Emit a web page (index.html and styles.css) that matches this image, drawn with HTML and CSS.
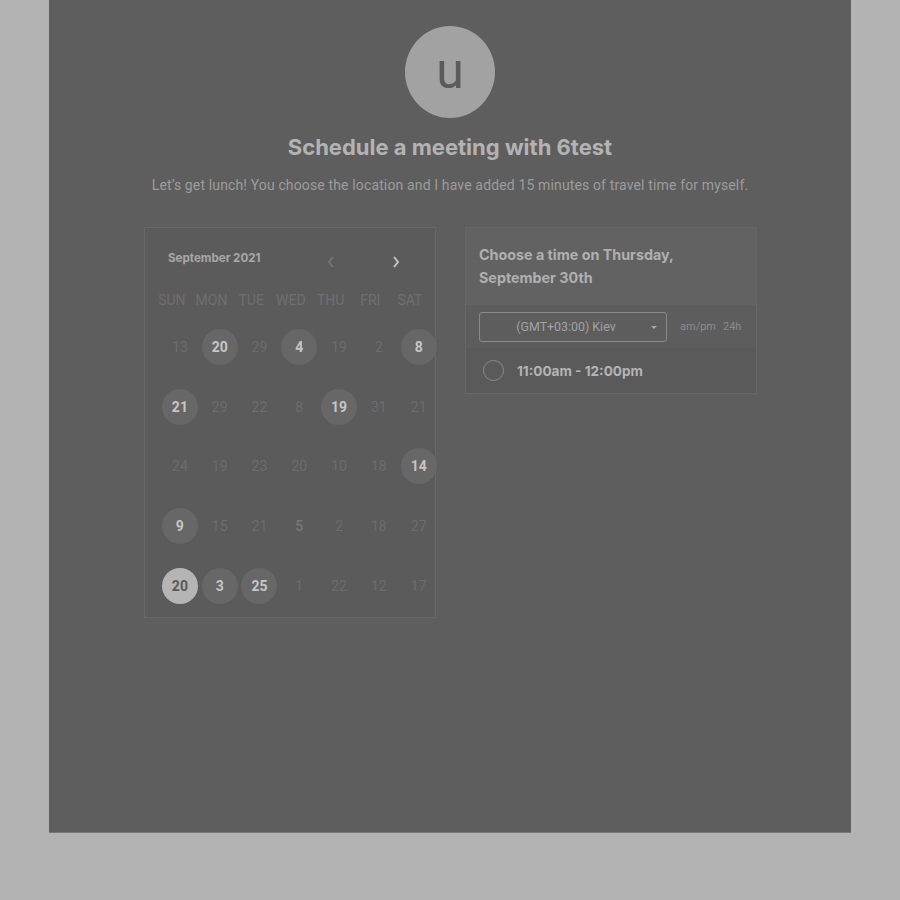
FILE: index.html
```html
<!DOCTYPE html>
<html>
<head>
<meta charset="utf-8">
<link rel="stylesheet" href="styles.css">
</head>
<body>
<div class="panel">
  <div class="avatar"><span>u</span></div>
  <h1 class="title">Schedule a meeting with 6test</h1>
  <p class="subtitle">Let’s get lunch! You choose the location and I have added 15 minutes of travel time for myself.</p>
  <div class="cards">
    <div class="calendar">
      <div class="cal-head">
        <span class="month">September 2021</span>
        <span class="arrow prev"><svg width="10" height="14" viewBox="0 0 10 14"><path d="M7 2 L3 7 L7 12" fill="none" stroke="currentColor" stroke-width="2"/></svg></span>
        <span class="arrow next"><svg width="10" height="14" viewBox="0 0 10 14"><path d="M3 2 L7 7 L3 12" fill="none" stroke="currentColor" stroke-width="2"/></svg></span>
      </div>
      <div class="dow">
        <span>SUN</span><span>MON</span><span>TUE</span><span>WED</span><span>THU</span><span>FRI</span><span>SAT</span>
      </div>
      <div class="days">
        <span>13</span><span class="av">20</span><span>29</span><span class="av">4</span><span>19</span><span>2</span><span class="av">8</span>
        <span class="av">21</span><span>29</span><span>22</span><span>8</span><span class="av">19</span><span>31</span><span>21</span>
        <span>24</span><span>19</span><span>23</span><span>20</span><span>10</span><span>18</span><span class="av">14</span>
        <span class="av">9</span><span>15</span><span>21</span><span class="semi">5</span><span>2</span><span>18</span><span>27</span>
        <span class="sel">20</span><span class="av">3</span><span class="av">25</span><span>1</span><span>22</span><span>12</span><span>17</span>
      </div>
    </div>
    <div class="times">
      <div class="times-head">Choose a time on Thursday, September 30th</div>
      <div class="tz-bar">
        <div class="tz-select"><span>(GMT+03:00) Kiev</span><span class="caret"></span></div>
        <div class="fmt"><span>am/pm</span><span>24h</span></div>
      </div>
      <div class="slot"><span class="radio"></span><span class="slot-text">11:00am - 12:00pm</span></div>
    </div>
  </div>
</div>
</body>
</html>
```
FILE: styles.css
```css
* { box-sizing: border-box; }
html, body { margin: 0; padding: 0; }
body {
  background: #b3b3b3;
  width: 900px;
  height: 900px;
  font-family: Roboto, "Liberation Sans", sans-serif;
}
.panel {
  margin-left: 49px;
  width: 802px;
  height: 833px;
  background: #5e5e5e;
  border-bottom: 1px solid #787878;
  display: flex;
  flex-direction: column;
  align-items: center;
  padding-top: 26px;
}
.avatar {
  width: 90px;
  height: 92px;
  border-radius: 50%;
  background: #a2a2a2;
  display: flex;
  align-items: center;
  justify-content: center;
}
.avatar span {
  font-family: Roboto, sans-serif;
  font-size: 50px;
  color: #5b5b5b;
  line-height: 1;
  margin-top: -3px;
}
.title {
  margin: 15px 0 0;
  font-family: Inter, sans-serif;
  font-weight: 700;
  font-size: 22px;
  letter-spacing: 0;
  line-height: 28px;
  color: #b3b3b3;
}
.subtitle {
  margin: 14px 0 0;
  font-size: 14px;
  letter-spacing: 0.14px;
  line-height: 20px;
  color: #9c9c9c;
}
.cards {
  margin-top: 32px;
  display: flex;
  gap: 29px;
  align-items: flex-start;
  align-self: flex-start;
  margin-left: 95px;
}
.calendar {
  width: 292px;
  height: 391px;
  background: #5b5b5b;
  border: 1px solid #676767;
  padding-top: 20px;
}
.cal-head {
  display: flex;
  align-items: center;
  height: 20px;
  padding-left: 23px;
}
.month {
  font-family: Inter, sans-serif;
  font-weight: 700;
  font-size: 11.6px;
  color: #a8a8a8;
  width: 158px;
}
.arrow { display: flex; align-items: center; margin-top: 8px; }
.prev { color: #737373; }
.next { color: #c4c4c4; margin-left: 55px; }
.dow {
  display: grid;
  grid-template-columns: repeat(7, 39.7px);
  padding-left: 7px;
  margin-top: 23px;
  font-size: 14px;
  color: #6f6f6f;
  line-height: 18px;
}
.dow span { text-align: center; }
.days {
  display: grid;
  grid-template-columns: repeat(7, 39.8px);
  grid-auto-rows: 59.7px;
  padding-left: 15px;
  margin-top: 8px;
}
.days span {
  display: flex;
  align-items: center;
  justify-content: center;
  font-size: 14px;
  color: #6c6c6c;
}
.days span.av, .days span.sel {
  width: 36px;
  height: 36px;
  border-radius: 50%;
  justify-self: center;
  align-self: center;
  background: #676767;
  color: #c6c6c6;
  font-weight: 700;
}
.days span.sel {
  background: #b5b5b5;
  color: #595959;
}
.days span.semi { color: #777777; font-weight: 500; }
.times {
  width: 292px;
  border: 1px solid #666666;
  background: #5a5a5a;
}
.times-head {
  background: #626262;
  padding: 15px 70px 14px 13px;
  font-family: Inter, sans-serif;
  font-weight: 700;
  font-size: 14.3px;
  line-height: 23px;
  color: #b0b0b0;
  height: 77px;
}
.tz-bar {
  display: flex;
  align-items: center;
  height: 43px;
  padding-left: 13px;
  background: #5d5d5d;
}
.tz-select {
  width: 188px;
  height: 30px;
  border: 1px solid #8a8a8a;
  border-radius: 3px;
  display: flex;
  align-items: center;
  justify-content: center;
  padding-right: 14px;
  position: relative;
  font-size: 12.4px;
  color: #a2a2a2;
}
.caret {
  position: absolute;
  right: 9px;
  top: 13px;
  width: 0;
  height: 0;
  border-left: 3.5px solid transparent;
  border-right: 3.5px solid transparent;
  border-top: 3.5px solid #a8a8a8;
}
.fmt {
  margin-left: 13px;
  display: flex;
  gap: 7px;
  font-size: 11px;
  color: #8c8c8c;
}
.slot {
  display: flex;
  align-items: center;
  height: 45px;
  padding-left: 17px;
}
.radio {
  width: 21px;
  height: 21px;
  border: 1.5px solid #8a8a8a;
  border-radius: 50%;
}
.slot-text {
  margin-left: 13px;
  font-family: Inter, sans-serif;
  font-weight: 700;
  font-size: 13.6px;
  color: #b4b4b4;
}
```
